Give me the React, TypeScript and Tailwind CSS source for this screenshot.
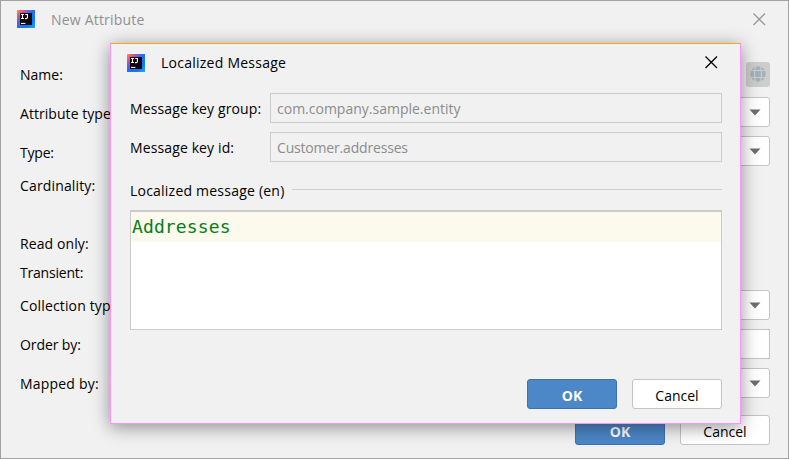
import type { ReactNode } from "react";

function Logo({ id }: { id: string }) {
  return (
    <svg width="18" height="18" viewBox="0 0 18 18" className="shrink-0">
      <defs>
        <linearGradient id={id} x1="0" y1="0" x2="1" y2="1">
          <stop offset="0" stopColor="#fd9a4a" />
          <stop offset="0.14" stopColor="#fb5a68" />
          <stop offset="0.3" stopColor="#8d5bc8" />
          <stop offset="0.45" stopColor="#2b6cf0" />
          <stop offset="0.75" stopColor="#087cfa" />
          <stop offset="1" stopColor="#30a4f5" />
        </linearGradient>
      </defs>
      <path d="M0 0H18V18H0Z" fill={`url(#${id})`} />
      <path d="M3 3H15V15H3Z" fill="#14060f" />
      <path d="M4 4.5H7M5.5 4.5V8.5M4 8.5H7M8.3 4.5H11M10.4 4.5V7.4Q10.4 8.6 9.2 8.6H8" fill="none" stroke="#fff" strokeWidth="1.1" />
      <path d="M4 13.4H8.4" stroke="#fff" strokeWidth="1" />
    </svg>
  );
}

function CloseIcon({ color }: { color: string }) {
  return (
    <svg width="13" height="13" viewBox="0 0 13 13" className="shrink-0">
      <path d="M0.5 0.5L12 12M12 0.5L0.5 12" stroke={color} strokeWidth="1.3" fill="none" />
    </svg>
  );
}

function Globe() {
  return (
    <svg width="16" height="16" viewBox="0 0 16 16">
      <circle cx="8" cy="8" r="7.7" fill="#a3b1b9" />
      <path d="M0 4.5H16M0 11.5H16M5.6 0Q3.4 8 5.6 16M10.4 0Q12.6 8 10.4 16" fill="none" stroke="#cdcdcd" strokeWidth="1.2" />
    </svg>
  );
}

function Combo() {
  return (
    <div className="flex h-[30px] w-[200px] items-center justify-end rounded-[3px] border border-[#c4c4c4] bg-white pr-[8px]">
      <svg width="12" height="7" viewBox="0 0 12 7">
        <path d="M0.5 0.5H11.5L6 6.5Z" fill="#6e6e6e" />
      </svg>
    </div>
  );
}

function Row({ label, h, text, children }: { label: string; h: string; text: string; children?: ReactNode }) {
  return (
    <div className={`flex shrink-0 items-start justify-between ${h}`}>
      <span className={`whitespace-nowrap ${text}`}>{label}</span>
      {children}
    </div>
  );
}

const okClass =
  "flex h-[30px] w-[90px] items-center justify-center rounded-[3px] border border-[#3c72b0] bg-[#4c87c8] pt-[3px] text-[14px] font-bold text-white";
const cancelClass =
  "flex h-[30px] w-[90px] items-center justify-center rounded-[3px] border border-[#c4c4c4] bg-white pt-[3px]";

const edgeSpecks = [
  "-left-px w-px top-[23px] h-[3px] bg-[#39405e]",
  "-left-px w-px top-[58px] h-[9px] bg-[#c69758]",
  "-left-px w-px top-[96px] h-[11px] bg-[#99601c]",
  "-left-px w-px top-[138px] h-[8px] bg-[#666666]",
  "-left-px w-px top-[178px] h-[9px] bg-[#c49a68]",
  "-left-px w-px top-[213px] h-[9px] bg-[#525b83]",
  "-left-px w-px top-[248px] h-[10px] bg-[#b9a777]",
  "-left-px w-px top-[318px] h-[8px] bg-[#315e9c]",
  "-left-px w-px top-[370px] h-[34px] bg-[#2f659c]",
  "-left-px w-px top-[420px] h-[8px] bg-[#4e5553]",
  "-right-px w-px top-[347px] h-[7px] bg-[#a8a468]",
  "-right-px w-px top-[423px] h-[6px] bg-[#3a6ea8]",
  "-bottom-px h-px left-[677px] w-[6px] bg-[#4a4a4a]",
  "-bottom-px h-px left-[685px] w-[4px] bg-[#4a4a4a]",
  "-bottom-px h-px left-[692px] w-[5px] bg-[#4a4a4a]",
  "-bottom-px h-px left-[700px] w-[8px] bg-[#4a4a4a]",
  "-bottom-px h-px left-[711px] w-[4px] bg-[#4a4a4a]",
  "-bottom-px h-px left-[717px] w-[5px] bg-[#4a4a4a]",
  "-bottom-px h-px left-[756px] w-[6px] bg-[#4478a8]",
  "-bottom-px h-px left-[765px] w-[5px] bg-[#4478a8]",
  "-bottom-px h-px left-[773px] w-[5px] bg-[#4478a8]",
  "-bottom-px h-px left-[780px] w-[5px] bg-[#4478a8]",
];

export default function App() {
  return (
    <div className="relative h-[459px] w-[789px] overflow-hidden border border-[#a2a2a2] bg-[#f1f1f1] font-['Open_Sans','Noto_Sans',sans-serif] text-[14px] text-black">
      <header className="flex h-[36px] items-center pl-[16px] pr-[22px] text-[#909090]">
        <Logo id="logo-back" />
        <span className="ml-[16px] grow tracking-[0.2px]">New Attribute</span>
        <CloseIcon color="#999999" />
      </header>

      <main className="flex flex-col pt-[21px] pr-[18px] pl-[19px]">
        <Row label="Name:" h="h-[39px]" text="leading-[34px] tracking-[0px]">
          <div className="flex items-center gap-[5px] pt-px">
            <div className="h-[30px] w-[200px] border border-[#c4c4c4] bg-white" />
            <div className="flex h-[25px] w-[24px] items-center justify-center rounded-[3px] bg-[#cdcdcd]">
              <Globe />
            </div>
          </div>
        </Row>
        <Row label="Attribute type:" h="h-[39px]" text="leading-[34px] tracking-[0.05px]"><Combo /></Row>
        <Row label="Type:" h="h-[33px]" text="leading-[34px] tracking-[-0.2px]"><Combo /></Row>
        <Row label="Cardinality:" h="h-[59px]" text="leading-[34px] tracking-[0.15px]" />
        <Row label="Read only:" h="h-[29px]" text="leading-[32px] tracking-[0.1px]" />
        <Row label="Transient:" h="h-[33px]" text="leading-[32px] tracking-[-0.2px]" />
        <Row label="Collection type:" h="h-[39px]" text="leading-[32px] tracking-[0.15px]"><Combo /></Row>
        <Row label="Order by:" h="h-[39px]" text="leading-[32px] tracking-[-0.1px]">
          <div className="h-[30px] w-[200px] border border-[#c4c4c4] bg-white" />
        </Row>
        <Row label="Mapped by:" h="h-[47px]" text="leading-[32px] tracking-[0.2px]"><Combo /></Row>
        <div className="flex justify-end gap-[15px]">
          <div className={okClass}>OK</div>
          <div className={cancelClass}>Cancel</div>
        </div>
      </main>

      {edgeSpecks.map((c) => (
        <i key={c} className={`absolute ${c}`} />
      ))}

      <section className="absolute top-[42px] left-[109px] flex h-[381px] w-[631px] flex-col border border-[#ff94f8] border-t-[#f5a623] bg-[#f1f1f1] pr-[18px] pl-[19px] shadow-[0_3px_17px_rgba(0,0,0,0.42)]">
        <header className="-ml-[3px] flex h-[37px] items-center pr-[4px]">
          <Logo id="logo-front" />
          <span className="ml-[16px] grow tracking-[0.25px]">Localized Message</span>
          <CloseIcon color="#000000" />
        </header>
        <div className="mt-[12px] flex h-[30px] items-center">
          <span className="w-[140px] shrink-0 tracking-[0.12px]">Message key group:</span>
          <div className="flex h-[30px] grow items-center border border-[#cbcbcb] pl-[6px] text-[#8c8c8c]">com.company.sample.entity</div>
        </div>
        <div className="mt-[9px] flex h-[30px] items-center">
          <span className="w-[140px] shrink-0 tracking-[0.12px]">Message key id:</span>
          <div className="flex h-[30px] grow items-center border border-[#cbcbcb] pl-[6px] tracking-[-0.18px] text-[#8c8c8c]">Customer.addresses</div>
        </div>
        <div className="mt-[18px] flex h-[20px] items-center gap-[7px]">
          <span className="tracking-[0.22px]">Localized message (en)</span>
          <i className="mb-[2px] h-px grow bg-[#cfcfcf]" />
        </div>
        <div className="mt-[10px] h-[120px] border border-t-2 border-[#cbcbcb] bg-white">
          <div className="h-[30px] bg-[#fcfaed] pl-px font-['DejaVu_Sans_Mono',monospace] text-[18px] leading-[30px] tracking-[0.12px] text-[#067d17]">Addresses</div>
        </div>
        <div className="mt-[49px] flex justify-end gap-[15px]">
          <div className={okClass}>OK</div>
          <div className={cancelClass}>Cancel</div>
        </div>
      </section>
    </div>
  );
}
